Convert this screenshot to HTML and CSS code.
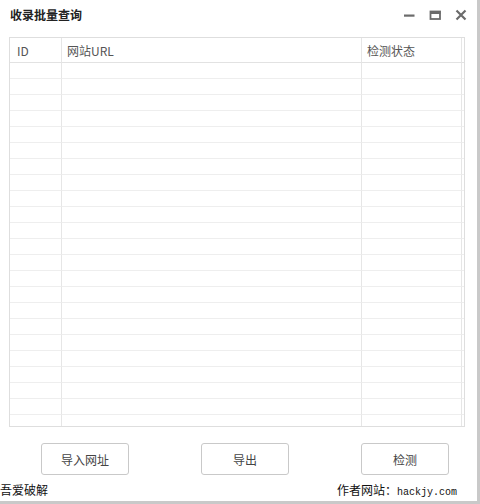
FILE: index.html
```html
<!DOCTYPE html>
<html lang="zh-CN">
<head>
    <meta charset="UTF-8">
    <title>收录批量查询</title>
    <link rel="stylesheet" href="styles.css">
</head>
<body>
    <div class="window">
        <div class="titlebar">
            <h1 class="title">收录批量查询</h1>
            <div class="controls">
                <svg class="ctl" width="12" height="12" viewBox="0 0 12 12"><rect x="1" y="5.5" width="10.5" height="2.2" fill="#6b6b6b"/></svg>
                <svg class="ctl" width="12" height="12" viewBox="0 0 12 12"><rect x="1.5" y="2.5" width="9.5" height="7.5" fill="none" stroke="#6b6b6b" stroke-width="1.8"/><rect x="1" y="2" width="10.5" height="3" fill="#6b6b6b"/></svg>
                <svg class="ctl" width="12" height="12" viewBox="0 0 12 12"><path d="M1.5 1.5 L10.5 10.5 M10.5 1.5 L1.5 10.5" stroke="#6b6b6b" stroke-width="2.2"/></svg>
            </div>
        </div>

        <div class="grid-box">
            <table class="grid">
                <colgroup>
                    <col class="c-id">
                    <col class="c-url">
                    <col class="c-state">
                    <col class="c-pad">
                </colgroup>
                <thead>
                    <tr><th class="id">ID</th><th>网站URL</th><th>检测状态</th><th></th></tr>
                </thead>
                <tbody>
                    <tr><td></td><td></td><td></td><td></td></tr>
                    <tr><td></td><td></td><td></td><td></td></tr>
                    <tr><td></td><td></td><td></td><td></td></tr>
                    <tr><td></td><td></td><td></td><td></td></tr>
                    <tr><td></td><td></td><td></td><td></td></tr>
                    <tr><td></td><td></td><td></td><td></td></tr>
                    <tr><td></td><td></td><td></td><td></td></tr>
                    <tr><td></td><td></td><td></td><td></td></tr>
                    <tr><td></td><td></td><td></td><td></td></tr>
                    <tr><td></td><td></td><td></td><td></td></tr>
                    <tr><td></td><td></td><td></td><td></td></tr>
                    <tr><td></td><td></td><td></td><td></td></tr>
                    <tr><td></td><td></td><td></td><td></td></tr>
                    <tr><td></td><td></td><td></td><td></td></tr>
                    <tr><td></td><td></td><td></td><td></td></tr>
                    <tr><td></td><td></td><td></td><td></td></tr>
                    <tr><td></td><td></td><td></td><td></td></tr>
                    <tr><td></td><td></td><td></td><td></td></tr>
                    <tr><td></td><td></td><td></td><td></td></tr>
                    <tr><td></td><td></td><td></td><td></td></tr>
                    <tr><td></td><td></td><td></td><td></td></tr>
                    <tr><td></td><td></td><td></td><td></td></tr>
                    <tr><td></td><td></td><td></td><td></td></tr>
                </tbody>
            </table>
        </div>

        <div class="buttons">
            <button class="btn">导入网址</button>
            <button class="btn">导出</button>
            <button class="btn">检测</button>
        </div>

        <div class="footer">
            <span>吾爱破解</span>
            <span>作者网站：<span class="mono">hackjy.com</span></span>
        </div>
    </div>
</body>
</html>
```

FILE: styles.css
```css
body {
    margin: 0;
    width: 480px;
    height: 504px;
    background-color: #c9c9c9;
    font-family: "Noto Sans CJK SC", "Noto Sans", sans-serif;
    color: #333;
    overflow: hidden;
}

.window {
    width: 477px;
    height: 501px;
    background-color: white;
    display: flex;
    flex-direction: column;
}

.titlebar {
    height: 30px;
    display: flex;
    align-items: center;
    justify-content: space-between;
    padding: 0 10px 0 10px;
}

.title {
    margin: 0;
    font-size: 12px;
    font-weight: bold;
    color: #222;
    line-height: 14px;
}

.controls {
    display: flex;
    gap: 14px;
    align-items: center;
}

.ctl {
    display: block;
}

.grid-box {
    margin: 7px 0 0 9px;
    width: 454px;
    height: 388px;
    border: 1px solid #dedede;
    overflow: hidden;
}

.grid {
    border-collapse: separate;
    border-spacing: 0;
    table-layout: fixed;
    width: 454px;
}

.c-id { width: 52px; }
.c-url { width: 300px; }
.c-state { width: 100px; }
.c-pad { width: 2px; }

.grid th,
.grid td {
    padding: 0;
    border-right: 1px solid #e6e6e6;
    border-bottom: 1px solid #eeeeee;
}

.grid th:last-child,
.grid td:last-child {
    border-right: none;
}

.grid th {
    height: 24px;
    padding-left: 5px;
    text-align: left;
    font-size: 12px;
    font-weight: normal;
    color: #555;
    border-bottom-color: #e2e2e2;
}

.grid th.id {
    padding-left: 7px;
}

.grid th:last-child {
    padding-left: 0;
}

.grid td {
    height: 15px;
}

.buttons {
    display: flex;
    gap: 72px;
    padding-left: 41px;
    margin-top: 16px;
}

.btn {
    width: 88px;
    height: 32px;
    background-color: white;
    border: 1px solid #c9c9c9;
    border-radius: 3px;
    font-family: "Noto Sans CJK SC", sans-serif;
    font-size: 12px;
    color: #444;
    padding: 0;
}

.footer {
    margin-top: auto;
    height: 23px;
    display: flex;
    justify-content: space-between;
    align-items: center;
    padding-right: 20px;
    font-size: 12px;
    color: #111;
}

.mono {
    font-family: "Liberation Mono", monospace;
    font-size: 10px;
}
```
